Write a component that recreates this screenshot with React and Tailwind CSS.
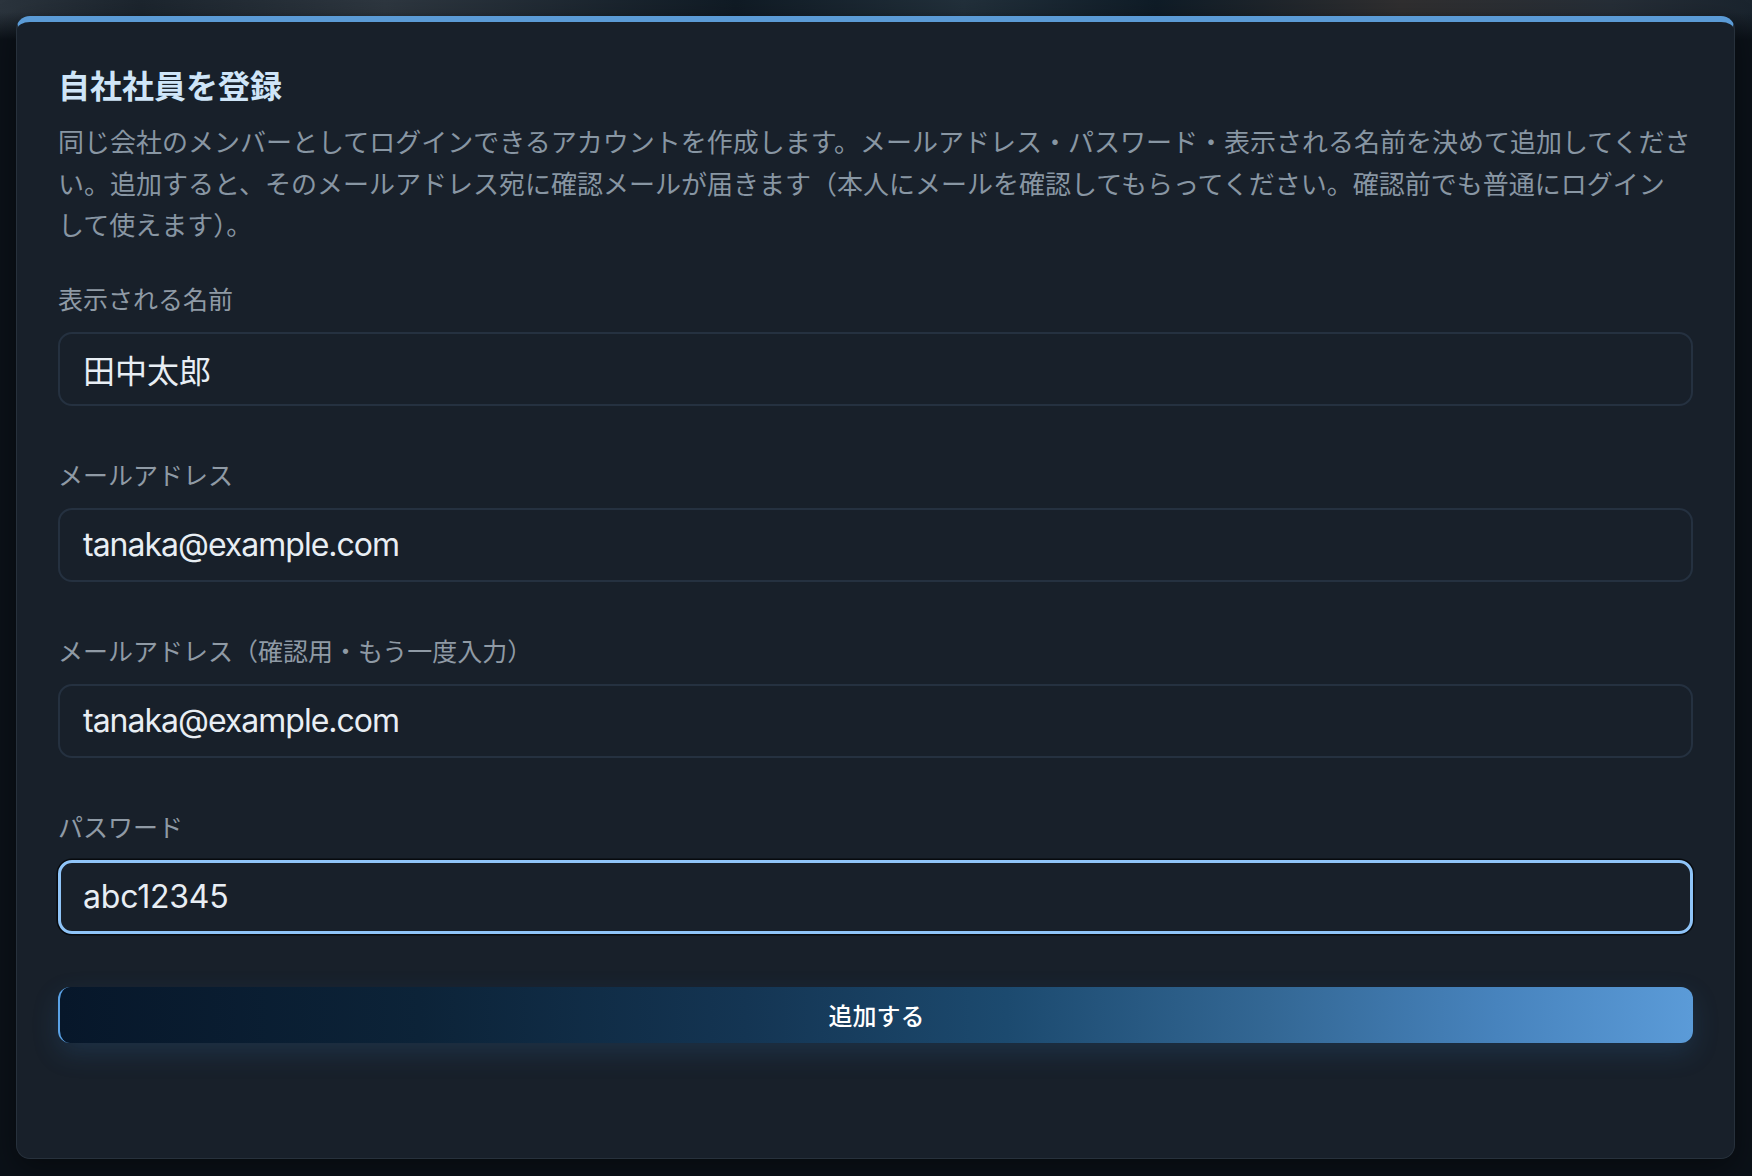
import React from "react";

const jp = { fontFamily: '"Noto Sans CJK JP", "Noto Sans", sans-serif' };
const latin = { fontFamily: 'Inter, "Noto Sans CJK JP", sans-serif' };

function Field({ label, value, focused, jpValue, track }) {
  return (
    <div className="flex flex-col">
      <label className="text-[25px] leading-[36px] text-[#8f9aa5]" style={jp}>
        {label}
      </label>
      <div
        className={
          "mt-4 h-[74px] rounded-[14px] flex items-center bg-[#18202a] " +
          (focused
            ? "border-[3px] border-[#8fc4f8] pl-[22px] shadow-[0_0_0_1.5px_#070a0e]"
            : "border-2 border-[#253140] pl-[23px]")
        }
      >
        <span className={"text-[32px] text-[#e8eef4] " + (track || "")} style={jpValue ? jp : latin}>
          {value}
        </span>
      </div>
    </div>
  );
}

export default function App() {
  return (
    <div className="w-[1752px] h-[1176px] overflow-hidden pt-4 pl-4 pr-[17px] pb-[17px] bg-[linear-gradient(180deg,rgba(11,17,24,0)_0px,rgba(11,17,24,0)_12px,#0b1118_40px),linear-gradient(90deg,#2b343d_0%,#1c252e_8%,#2e3740_22%,#101b25_42%,#22303b_55%,#0f1c27_66%,#302f30_80%,#262e37_92%,#1a242e_100%)]">
      <div className="h-full rounded-[14px] bg-[#18202a] border border-[#27313c] border-t-[6px] border-t-[#5b9bd6] px-[41px] pt-[40px] flex flex-col shadow-[0_10px_30px_rgba(0,0,0,0.4)]">
        <h1 className="text-[32px] leading-[44px] font-bold text-[#cfe5f8]" style={jp}>
          自社社員を登録
        </h1>
        <div className="mt-[14px] text-[26px] leading-[41.6px] text-[#8896a3]" style={jp}>
          <div className="whitespace-nowrap">
            同じ会社のメンバーとしてログインできるアカウントを作成します。メールアドレス・パスワード・表示される名前を決めて追加してくださ
          </div>
          <div className="whitespace-nowrap">
            い。追加すると、そのメールアドレス宛に確認メールが届きます（本人にメールを確認してもらってください。確認前でも普通にログイン
          </div>
          <div className="whitespace-nowrap">して使えます）。</div>
        </div>

        <div className="mt-[35px] flex flex-col gap-[50px]">
          <Field label="表示される名前" value="田中太郎" jpValue />
          <Field label="メールアドレス" value="tanaka@example.com" track="tracking-[-1px]" />
          <Field label="メールアドレス（確認用・もう一度入力）" value="tanaka@example.com" track="tracking-[-1px]" />
          <Field label="パスワード" value="abc12345" focused track="tracking-[-0.2px]" />
        </div>

        <button
          className="mt-[53px] h-[56px] w-full rounded-[12px] border-l-2 border-l-[#5aa2e6] bg-[linear-gradient(90deg,#07172a_0%,#0c2338_22%,#143553_42%,#1c4a6f_58%,#336794_74%,#4783bd_88%,#5b9bd8_100%)] text-white text-[24px] font-medium shadow-[0_10px_26px_rgba(52,110,170,0.22)]"
          style={jp}
        >
          追加する
        </button>
      </div>
    </div>
  );
}
